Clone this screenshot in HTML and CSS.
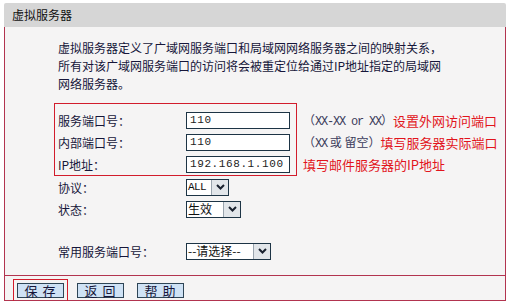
FILE: index.html
```html
<!DOCTYPE html>
<html lang="zh-CN">
<head>
  <meta charset="UTF-8" />
  <title>虚拟服务器</title>
  <link rel="stylesheet" href="styles.css">
</head>
<body>
  <div class="page">
    <div class="title">虚拟服务器</div>
    <div class="panel">
      <div class="content">
        <p class="desc">虚拟服务器定义了广域网服务端口和局域网网络服务器之间的映射关系，<br>所有对该广域网服务端口的访问将会被重定位给通过IP地址指定的局域网<br>网络服务器。</p>

        <!-- 需要填写的三项 -->
        <div class="group">
          <div class="redbox">
            <div class="row"><span class="label">服务端口号：</span><input class="field" type="text" value="110"></div>
            <div class="row"><span class="label">内部端口号：</span><input class="field" type="text" value="110"></div>
            <div class="row"><span class="label">IP地址：</span><input class="field" type="text" value="192.168.1.100"></div>
          </div>
          <div class="hints">
            <div class="hint"><span class="fmt">（<span class="lat">XX-XX or XX</span>）</span><span class="red">设置外网访问端口</span></div>
            <div class="hint"><span class="fmt">（<span class="lat">XX</span> 或 留空）</span><span class="red">填写服务器实际端口</span></div>
            <div class="hint"><span class="red">填写邮件服务器的IP地址</span></div>
          </div>
        </div>

        <div class="row plain">
          <span class="label">协议：</span>
          <span class="sel sel-proto"><span class="sel-text lat">ALL</span><span class="sel-btn"><svg width="9" height="6" viewBox="0 0 9 6"><path d="M1 1L4.5 4.5L8 1" fill="none" stroke="#1a2230" stroke-width="2"/></svg></span></span>
        </div>
        <div class="row plain">
          <span class="label">状态：</span>
          <span class="sel sel-state"><span class="sel-text">生效</span><span class="sel-btn"><svg width="9" height="6" viewBox="0 0 9 6"><path d="M1 1L4.5 4.5L8 1" fill="none" stroke="#1a2230" stroke-width="2"/></svg></span></span>
        </div>
        <div class="row plain common">
          <span class="label">常用服务端口号：</span>
          <span class="sel sel-common"><span class="sel-text">--请选择--</span><span class="sel-btn"><svg width="9" height="6" viewBox="0 0 9 6"><path d="M1 1L4.5 4.5L8 1" fill="none" stroke="#1a2230" stroke-width="2"/></svg></span></span>
        </div>
      </div>

      <div class="footer">
        <button type="button" class="btn btn-save">保 存</button>
        <button type="button" class="btn">返 回</button>
        <button type="button" class="btn">帮 助</button>
      </div>
    </div>
  </div>
</body>
</html>
```

FILE: styles.css
```css
/* ===== 虚拟服务器 ===== */
body {
  margin: 0;
  background: #fff;
  font: 12px "Noto Sans CJK SC", sans-serif;
  color: #16163a;
}

.page { margin: 3px 0 0 4px; width: 502px; }

.title {
  height: 24px; line-height: 24px;
  padding-left: 8px;
  background: #d6d6d6;
  color: #111;
  border-radius: 2px 2px 0 0;
}

.panel {
  background: #f5f4f4;
  border: 1px solid #b2344f; border-top: none;
}

.content {
  padding: 12px 0 13px 0;
  border-bottom: 1px solid #b2344f;
}

.desc { margin: 0 0 0 53px; line-height: 18px; }

.group { display: flex; margin-top: 10px; }

.redbox {
  margin-left: 49px;
  padding: 5px 6px 0 3px;
  border: 1px solid #d21c2c;
}

.row { display: flex; align-items: center; height: 22px; }
.row .label { width: 128px; flex: none; }
.plain { margin-left: 53px; }
.common { margin-top: 20px; }

.field {
  box-sizing: border-box;
  width: 104px; height: 17px;
  margin: 0; padding: 0 3px;
  border: 1px solid #1d3445;
  background: #fff; color: #222;
  font: 11px "Liberation Mono", monospace;
  letter-spacing: 0.6px;
  outline: none;
}

.lat { font: 12px "Liberation Mono", monospace; letter-spacing: -1.2px; }

.hints { padding-top: 6px; margin-left: 6px; }
.hint { height: 22px; display: flex; align-items: center; white-space: nowrap; }
.fmt { color: #3c3c5c; }
.red { color: #e2141c; font-size: 13px; }

/* listes déroulantes dessinées */
.sel {
  box-sizing: border-box;
  display: inline-flex; align-items: center;
  height: 17px;
  border: 1px solid #1d3445;
  background: #fff; color: #111;
}
.sel-text { flex: 1; padding-left: 1px; line-height: 14px; white-space: nowrap; }
.sel-proto .sel-text { letter-spacing: -0.6px; font-size: 11px; }
.sel-proto { width: 43px; }
.sel-state { width: 55px; }
.sel-common { width: 85px; }
.sel-btn {
  box-sizing: border-box;
  width: 17px; height: 15px; flex: none;
  display: flex; align-items: center; justify-content: center;
  background: #e2e6ea;
  border-left: 1px solid #9aa4ae;
}

.footer { box-sizing: border-box; height: 24px; padding: 7px 0 0 12px; display: flex; }

.btn {
  box-sizing: border-box;
  width: 47px; height: 15px;
  margin: 0 13px 0 0; padding: 0;
  background: #cfe2f5;
  border: 1px solid #2e4556;
  color: #16163a;
  font: 13px/13px "Noto Sans CJK SC", sans-serif;
  letter-spacing: 1px;
  cursor: pointer;
}
.btn-save { outline: 1px solid #d21c2c; outline-offset: 3px; }
```
